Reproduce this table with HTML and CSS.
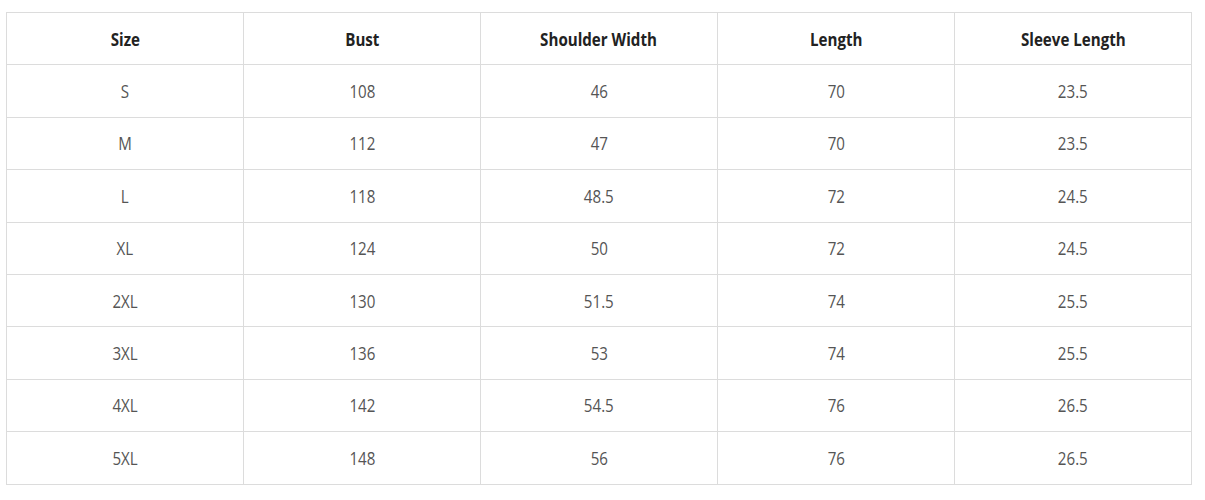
FILE: index.html
```html
<!DOCTYPE html>
<html>
<head>
<meta charset="utf-8">
<link rel="stylesheet" href="styles.css">
</head>
<body>
<table class="size-table">
  <thead>
    <tr><th><span>Size</span></th><th><span>Bust</span></th><th><span>Shoulder Width</span></th><th><span>Length</span></th><th><span>Sleeve Length</span></th></tr>
  </thead>
  <tbody>
    <tr><td><span>S</span></td><td><span>108</span></td><td><span>46</span></td><td><span>70</span></td><td><span>23.5</span></td></tr>
    <tr><td><span>M</span></td><td><span>112</span></td><td><span>47</span></td><td><span>70</span></td><td><span>23.5</span></td></tr>
    <tr><td><span>L</span></td><td><span>118</span></td><td><span>48.5</span></td><td><span>72</span></td><td><span>24.5</span></td></tr>
    <tr><td><span>XL</span></td><td><span>124</span></td><td><span>50</span></td><td><span>72</span></td><td><span>24.5</span></td></tr>
    <tr><td><span>2XL</span></td><td><span>130</span></td><td><span>51.5</span></td><td><span>74</span></td><td><span>25.5</span></td></tr>
    <tr><td><span>3XL</span></td><td><span>136</span></td><td><span>53</span></td><td><span>74</span></td><td><span>25.5</span></td></tr>
    <tr><td><span>4XL</span></td><td><span>142</span></td><td><span>54.5</span></td><td><span>76</span></td><td><span>26.5</span></td></tr>
    <tr><td><span>5XL</span></td><td><span>148</span></td><td><span>56</span></td><td><span>76</span></td><td><span>26.5</span></td></tr>
  </tbody>
</table>
</body>
</html>
```
FILE: styles.css
```css
html, body {
  margin: 0;
  padding: 0;
  background: #fff;
}
body {
  padding: 12px 0 0 6px;
  font-family: "Open Sans", "Noto Sans", sans-serif;
}
.size-table {
  border-collapse: collapse;
  table-layout: fixed;
  width: 1185px;
}
.size-table th,
.size-table td {
  border: 1px solid #dcdcdc;
  width: 236px;
  height: 51.4px;
  padding: 0;
  text-align: center;
  vertical-align: middle;
}
.size-table th {
  font-size: 18px;
  font-weight: 700;
  color: #222;
}
.size-table td {
  font-size: 18px;
  font-weight: 400;
  color: #555;
}
.size-table span {
  display: inline-block;
  transform: scaleX(0.84);
}
```
